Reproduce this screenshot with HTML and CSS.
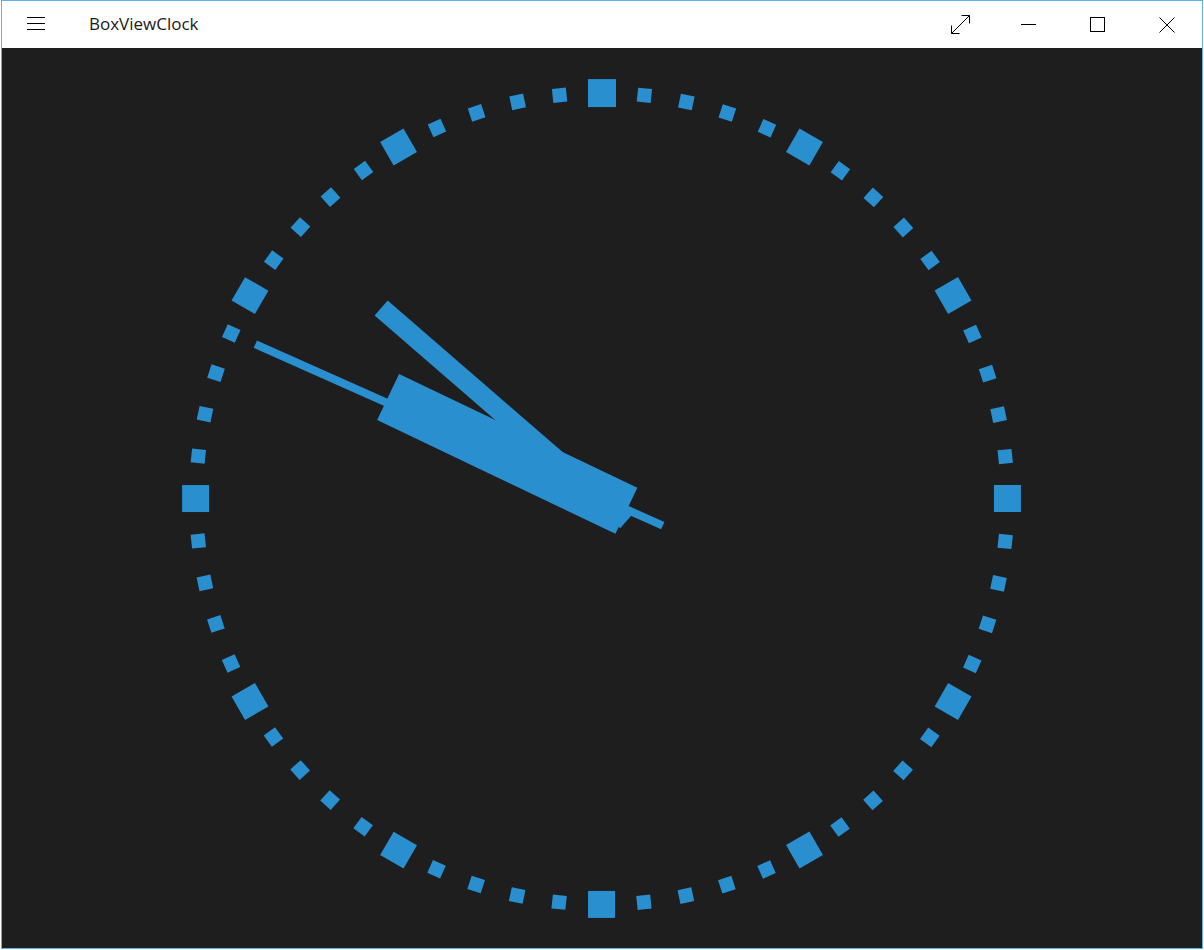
FILE: index.html
```html
<!DOCTYPE html>
<html lang="en">
<head>
<meta charset="utf-8">
<title>BoxViewClock</title>
<link rel="stylesheet" href="styles.css">
</head>
<body>
<div class="window">
  <header class="titlebar">
    <div class="btn menu">
      <svg width="18" height="13" viewBox="0 0 18 13" shape-rendering="crispEdges"><path d="M0 0.5H18M0 6.5H18M0 12.5H18" stroke="#000" stroke-width="1" fill="none"/></svg>
    </div>
    <div class="title">BoxViewClock</div>
    <div class="spacer"></div>
    <div class="btn cap expand">
      <svg width="19" height="19" viewBox="0 0 19 19"><path d="M10.5 0.5H18.5V8.5M18.5 0.5L0.5 18.5M0.5 10.5V18.5H8.5" stroke="#000" stroke-width="1" fill="none"/></svg>
    </div>
    <div class="btn cap minimize">
      <svg width="15" height="1" viewBox="0 0 15 1" shape-rendering="crispEdges"><path d="M0 0.5H15" stroke="#000" stroke-width="1"/></svg>
    </div>
    <div class="btn cap maximize">
      <svg width="15" height="15" viewBox="0 0 15 15" shape-rendering="crispEdges"><rect x="0.5" y="0.5" width="14" height="14" stroke="#000" stroke-width="1" fill="none"/></svg>
    </div>
    <div class="btn cap close">
      <svg width="16" height="16" viewBox="0 0 16 16"><path d="M0.5 0.5L15.5 15.5M15.5 0.5L0.5 15.5" stroke="#000" stroke-width="1" fill="none"/></svg>
    </div>
  </header>
  <main class="clock">
    <div class="tick big" style="--i:0"></div>
    <div class="tick" style="--i:1"></div>
    <div class="tick" style="--i:2"></div>
    <div class="tick" style="--i:3"></div>
    <div class="tick" style="--i:4"></div>
    <div class="tick big" style="--i:5"></div>
    <div class="tick" style="--i:6"></div>
    <div class="tick" style="--i:7"></div>
    <div class="tick" style="--i:8"></div>
    <div class="tick" style="--i:9"></div>
    <div class="tick big" style="--i:10"></div>
    <div class="tick" style="--i:11"></div>
    <div class="tick" style="--i:12"></div>
    <div class="tick" style="--i:13"></div>
    <div class="tick" style="--i:14"></div>
    <div class="tick big" style="--i:15"></div>
    <div class="tick" style="--i:16"></div>
    <div class="tick" style="--i:17"></div>
    <div class="tick" style="--i:18"></div>
    <div class="tick" style="--i:19"></div>
    <div class="tick big" style="--i:20"></div>
    <div class="tick" style="--i:21"></div>
    <div class="tick" style="--i:22"></div>
    <div class="tick" style="--i:23"></div>
    <div class="tick" style="--i:24"></div>
    <div class="tick big" style="--i:25"></div>
    <div class="tick" style="--i:26"></div>
    <div class="tick" style="--i:27"></div>
    <div class="tick" style="--i:28"></div>
    <div class="tick" style="--i:29"></div>
    <div class="tick big" style="--i:30"></div>
    <div class="tick" style="--i:31"></div>
    <div class="tick" style="--i:32"></div>
    <div class="tick" style="--i:33"></div>
    <div class="tick" style="--i:34"></div>
    <div class="tick big" style="--i:35"></div>
    <div class="tick" style="--i:36"></div>
    <div class="tick" style="--i:37"></div>
    <div class="tick" style="--i:38"></div>
    <div class="tick" style="--i:39"></div>
    <div class="tick big" style="--i:40"></div>
    <div class="tick" style="--i:41"></div>
    <div class="tick" style="--i:42"></div>
    <div class="tick" style="--i:43"></div>
    <div class="tick" style="--i:44"></div>
    <div class="tick big" style="--i:45"></div>
    <div class="tick" style="--i:46"></div>
    <div class="tick" style="--i:47"></div>
    <div class="tick" style="--i:48"></div>
    <div class="tick" style="--i:49"></div>
    <div class="tick big" style="--i:50"></div>
    <div class="tick" style="--i:51"></div>
    <div class="tick" style="--i:52"></div>
    <div class="tick" style="--i:53"></div>
    <div class="tick" style="--i:54"></div>
    <div class="tick big" style="--i:55"></div>
    <div class="tick" style="--i:56"></div>
    <div class="tick" style="--i:57"></div>
    <div class="tick" style="--i:58"></div>
    <div class="tick" style="--i:59"></div>
    <div class="hand hour"></div>
    <div class="hand minute"></div>
    <div class="hand second"></div>
  </main>
</div>
</body>
</html>
```

FILE: styles.css
```css
:root {
  --accent: #2a8fcf;
  --radius: 405.9px;
}

html, body {
  margin: 0;
  padding: 0;
}

body {
  background: #ffffff;
  width: 1204px;
  height: 950px;
  overflow: hidden;
}

.window {
  margin-left: 1px;
  width: 1200px;
  height: 947px;
  border: 1px solid #64b2ea;
  display: flex;
  flex-direction: column;
  background: #1e1e1e;
}

.titlebar {
  height: 47px;
  flex: 0 0 47px;
  background: #ffffff;
  display: flex;
  align-items: flex-start;
  padding-right: 1px;
}

.btn {
  height: 47px;
  display: flex;
  justify-content: center;
  align-items: flex-start;
  box-sizing: border-box;
}

.btn svg {
  display: block;
}

.menu {
  width: 68px;
  padding-top: 16px;
}

.title {
  margin-left: 19px;
  font-family: "Segoe UI", "Open Sans", "Noto Sans", sans-serif;
  font-size: 17px;
  line-height: 47px;
  color: #1a1a1a;
  margin-top: -1px;
}

.spacer {
  flex: 1;
}

.cap {
  width: 69px;
}

.expand {
  justify-content: flex-start;
  padding-left: 26px;
  padding-top: 14px;
}

.minimize {
  padding-top: 23px;
}

.maximize {
  padding-top: 16px;
}

.close {
  padding-top: 16px;
}

.clock {
  position: relative;
  height: 900px;
  flex: 0 0 900px;
  background: #1e1e1e;
  overflow: hidden;
}

.tick {
  position: absolute;
  left: 593.235px;
  top: 444.235px;
  width: 13.53px;
  height: 13.53px;
  background: var(--accent);
  transform: rotate(calc(var(--i) * 6deg)) translateY(calc(-1 * var(--radius)));
}

.tick.big {
  left: 586.47px;
  top: 437.47px;
  width: 27.06px;
  height: 27.06px;
}

.hand {
  position: absolute;
  background: var(--accent);
}

.hour {
  width: 50.7375px;
  height: 263.835px;
  left: 574.631px;
  top: 213.5485px;
  transform-origin: 50% 90%;
  transform: rotate(295.5deg);
}

.minute {
  width: 20.295px;
  height: 324.72px;
  left: 589.8525px;
  top: 158.752px;
  transform-origin: 50% 90%;
  transform: rotate(310.9deg);
}

.second {
  width: 8.118px;
  height: 446.49px;
  left: 595.941px;
  top: 71.4835px;
  transform-origin: 50% 85%;
  transform: rotate(294deg);
}
```
